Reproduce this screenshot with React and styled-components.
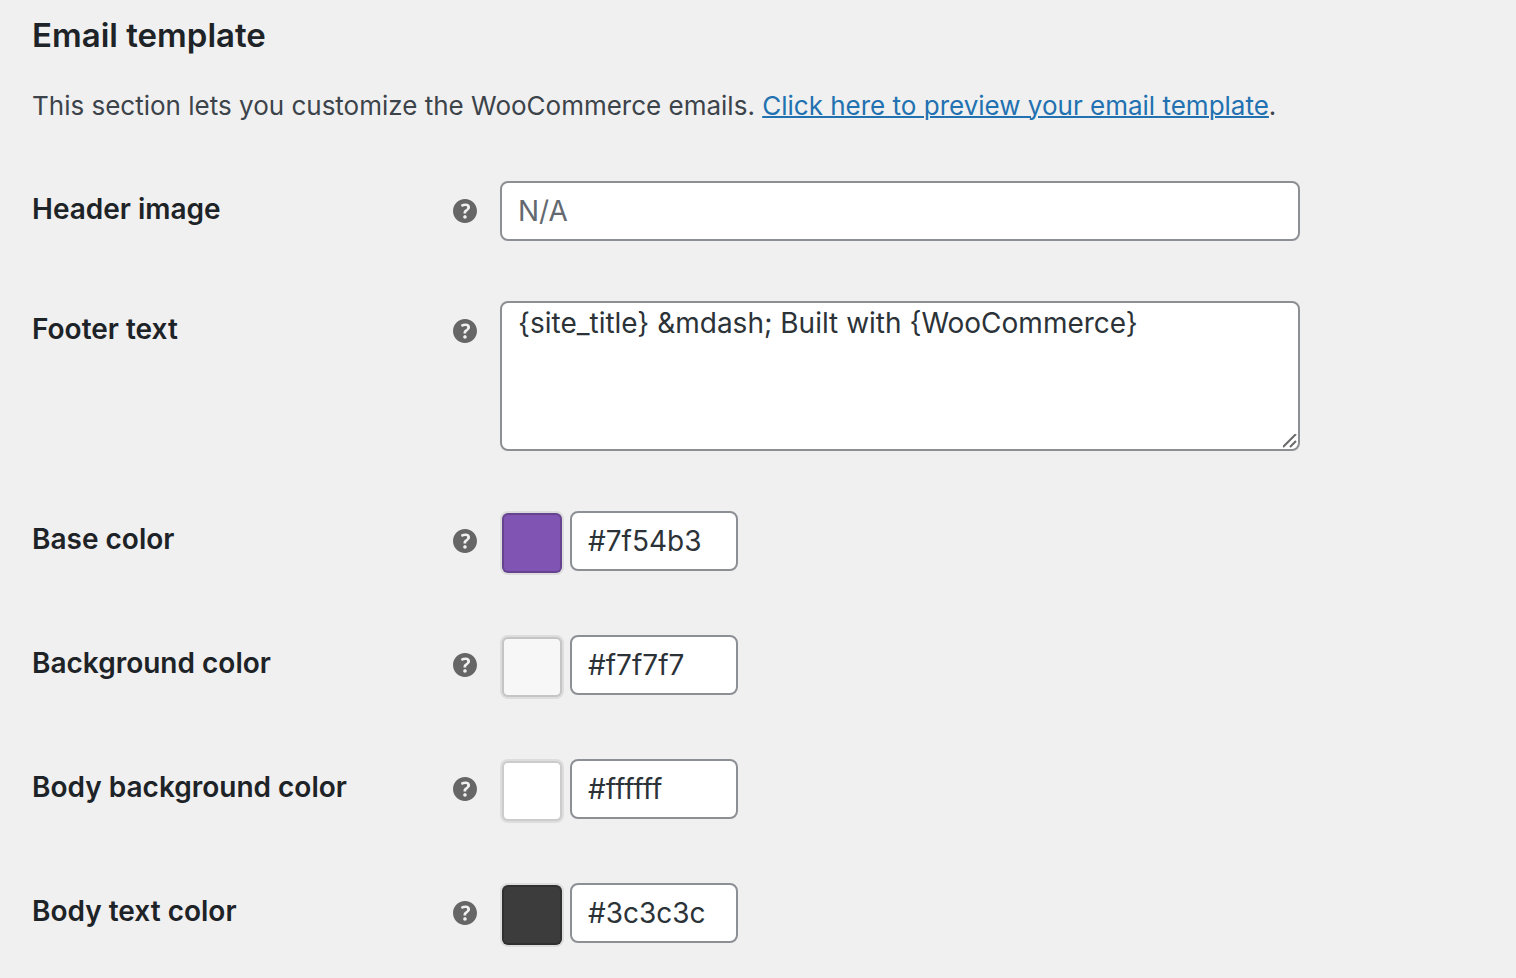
import React from 'react';
import styled, { createGlobalStyle } from 'styled-components';

const GlobalStyle = createGlobalStyle`
  *,
  *::before,
  *::after {
    box-sizing: border-box;
  }

  body {
    margin: 0;
    background: #f0f0f0;
    color: #3c434a;
    font-family: Inter, sans-serif;
    font-size: 26px;
  }
`;

const Page = styled.main`
  padding: 15px 32px 32px;
`;

const Title = styled.h2`
  margin: 0;
  color: #1d2327;
  font-size: 33px;
  font-weight: 600;
  line-height: 40px;
`;

const Description = styled.p`
  margin: 31px 0 55px;
  line-height: 40px;
`;

const PreviewLink = styled.a`
  color: #2271b1;
  text-decoration-thickness: 2px;
`;

const Form = styled.form`
  display: flex;
  flex-direction: column;
  gap: 60px;
`;

const Row = styled.div`
  display: grid;
  grid-template-columns: 420px 48px minmax(0, 800px);
  align-items: start;
`;

const Label = styled.label`
  padding-top: 8px;
  color: #1d2327;
  font-size: 28px;
  font-weight: 600;
  line-height: 40px;
`;

const Tip = styled.svg`
  display: block;
  width: 26px;
  height: 26px;
  margin-top: 17px;
`;

const TextInput = styled.input`
  width: ${(props) => props.$width || '100%'};
  height: 60px;
  padding: 0 16px;
  border: 2px solid #8c8f94;
  border-radius: 8px;
  background: #fff;
  color: #2c3338;
  font: inherit;
  font-size: 28px;

  &::placeholder {
    color: #646970;
    opacity: 1;
  }
`;

const TextArea = styled.textarea`
  display: block;
  width: 100%;
  height: 150px;
  padding: 0 16px;
  border: 2px solid #8c8f94;
  border-radius: 8px;
  background: #fff;
  color: #2c3338;
  font: inherit;
  font-size: 28px;
  line-height: 40px;
  resize: both;

  &::-webkit-resizer {
    background: url("data:image/svg+xml,%3Csvg xmlns='http://www.w3.org/2000/svg' width='15' height='15'%3E%3Cpath d='M0 13L13 0M7 13l6-6' stroke='dimgray' stroke-width='2'/%3E%3C/svg%3E")
      no-repeat;
  }
`;

const ColorField = styled.div`
  display: flex;
  gap: 8px;
  height: 64px;
`;

const Swatch = styled.button`
  width: 60px;
  height: 60px;
  margin: 2px 0 0 2px;
  padding: 0;
  border: 2px solid rgba(0, 0, 0, 0.2);
  border-radius: 6px;
  background: ${(props) => props.$color};
  box-shadow: 0 0 0 2px rgba(0, 0, 0, 0.08);
`;

function HelpTip() {
  return (
    <Tip viewBox="2.4 2.4 15.2 15.2" role="img" aria-label="Help">
      <path
        fill="#666"
        d="M17 10c0-3.87-3.14-7-7-7-3.87 0-7 3.13-7 7s3.13 7 7 7c3.86 0 7-3.13 7-7zm-6.3 1.48H9.14v-.43c0-.38.08-.7.24-.98s.46-.57.88-.89c.41-.29.68-.53.81-.71.14-.18.2-.39.2-.62 0-.25-.09-.44-.28-.58-.19-.13-.45-.19-.79-.19-.58 0-1.25.19-2 .57l-.64-1.28c.87-.49 1.8-.74 2.77-.74.81 0 1.45.2 1.92.58.48.39.71.91.71 1.55 0 .43-.09.8-.29 1.11-.19.32-.57.67-1.11 1.06-.38.28-.61.49-.71.63-.1.15-.15.34-.15.57v.35zm-1.47 2.74c-.18-.17-.27-.42-.27-.73 0-.33.08-.58.26-.75s.43-.25.77-.25c.32 0 .57.09.75.26s.27.42.27.74c0 .3-.09.55-.27.72-.18.18-.43.27-.75.27-.33 0-.58-.09-.76-.27z"
      />
    </Tip>
  );
}

const colors = [
  { id: 'base', label: 'Base color', value: '#7f54b3' },
  { id: 'background', label: 'Background color', value: '#f7f7f7' },
  { id: 'body-background', label: 'Body background color', value: '#ffffff' },
  { id: 'body-text', label: 'Body text color', value: '#3c3c3c' },
];

const App = () => (
  <Page>
    <GlobalStyle />
    <Title>Email template</Title>
    <Description>
      This section lets you customize the WooCommerce emails.{' '}
      <PreviewLink href="#preview">Click here to preview your email template</PreviewLink>.
    </Description>
    <Form>
      <Row>
        <Label htmlFor="header-image">Header image</Label>
        <HelpTip />
        <TextInput id="header-image" type="text" placeholder="N/A" />
      </Row>
      <Row>
        <Label htmlFor="footer-text">Footer text</Label>
        <HelpTip />
        <TextArea
          id="footer-text"
          defaultValue="{site_title} &amp;mdash; Built with {WooCommerce}"
        />
      </Row>
      {colors.map(({ id, label, value }) => (
        <Row key={id}>
          <Label htmlFor={id}>{label}</Label>
          <HelpTip />
          <ColorField>
            <Swatch type="button" $color={value} aria-label={`Pick ${label}`} />
            <TextInput id={id} type="text" defaultValue={value} $width="168px" />
          </ColorField>
        </Row>
      ))}
    </Form>
  </Page>
);

export default App;
